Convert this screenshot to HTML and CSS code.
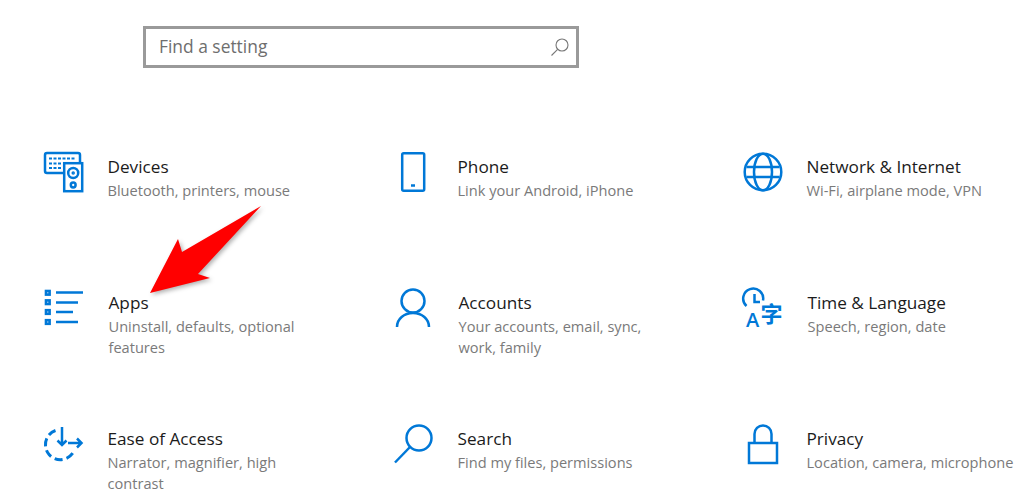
FILE: index.html
```html
<!DOCTYPE html>
<html lang="en">
<head>
<meta charset="utf-8">
<title>Settings</title>
<link rel="stylesheet" href="styles.css">
</head>
<body>
<main class="page">
  <div class="search">
    <span class="search-text">Find a setting</span>
    <svg class="search-icon" viewBox="0 0 20 20"><circle cx="12" cy="8" r="6"/><path d="M7.600 12.400 1.500 18.500"/></svg>
  </div>
  <div class="grid">
    <section class="item">
      <svg class="icon" viewBox="0 0 44 44"><path d="M19 23H3a2 2 0 0 1-2-2V5a2 2 0 0 1 2-2h31a2 2 0 0 1 2 2v8"/><rect x="20.200" y="13.200" width="18" height="28"/><circle cx="29.200" cy="23" r="5"/><circle class="thin" cx="29.200" cy="23" r="1"/><circle cx="29.200" cy="35" r="2.400"/><path class="dash" d="M5 8.500H32"/><path class="dash" d="M5 13.500H18M5 18H18"/></svg>
      <div class="text"><h2>Devices</h2><p>Bluetooth, printers, mouse</p></div>
    </section>
    <section class="item">
      <svg class="icon" viewBox="0 0 44 44"><rect x="8.200" y="3.200" width="22" height="37.600" rx="1.500"/><path d="M17 35.500H21"/></svg>
      <div class="text"><h2>Phone</h2><p>Link your Android, iPhone</p></div>
    </section>
    <section class="item">
      <svg class="icon" viewBox="0 0 44 44"><circle cx="20" cy="22" r="18.300"/><ellipse cx="20" cy="22" rx="9" ry="18.300"/><path d="M3.500 17H36.500M3.500 27H36.500"/></svg>
      <div class="text"><h2>Network &amp; Internet</h2><p>Wi-Fi, airplane mode, VPN</p></div>
    </section>

    <section class="item shifted">
      <svg class="icon" viewBox="0 0 44 44"><rect class="box" x="2" y="5" width="3.600" height="3.600"/><rect class="box" x="2" y="14.400" width="3.600" height="3.600"/><rect class="box" x="2" y="24.200" width="3.600" height="3.600"/><rect class="box" x="2" y="34.200" width="3.600" height="3.600"/><path d="M12 6.500H39M12 16.500H34M12 26H29M12 36H34"/></svg>
      <div class="text"><h2>Apps</h2><p>Uninstall, defaults, optional features</p></div>
    </section>
    <section class="item shifted">
      <svg class="icon" viewBox="0 0 44 44"><circle cx="19" cy="15" r="11.500"/><path d="M3 41C3 33 10 27 19 27S35 33 35 41"/></svg>
      <div class="text"><h2>Accounts</h2><p>Your accounts, email, sync, work, family</p></div>
    </section>
    <section class="item shifted">
      <svg class="icon" viewBox="0 0 44 44"><path d="M3.500 20A10 10 0 1 1 20 14.500"/><path d="M11.500 8V16H17"/><text class="glyph latin" x="3" y="41">A</text><text class="glyph cjk" x="17.500" y="36">字</text></svg>
      <div class="text"><h2>Time &amp; Language</h2><p>Speech, region, date</p></div>
    </section>

    <section class="item">
      <svg class="icon" viewBox="0 0 44 44"><path class="ring" d="M11.500 8.500A15 15 0 1 0 30 29"/><path d="M18 5V23M13.500 18.500 18 23 22.500 18.500M24 21H37M33 16.500 37.500 21 33 25.500"/></svg>
      <div class="text"><h2>Ease of Access</h2><p>Narrator, magnifier, high contrast</p></div>
    </section>
    <section class="item">
      <svg class="icon" viewBox="0 0 44 44"><circle cx="25" cy="16" r="12.500"/><path d="M16 25 1 40.500"/></svg>
      <div class="text"><h2>Search</h2><p>Find my files, permissions</p></div>
    </section>
    <section class="item">
      <svg class="icon" viewBox="0 0 44 44"><rect x="6" y="21" width="28" height="20"/><path d="M11.500 21V12a8.500 8.500 0 0 1 17 0V21"/></svg>
      <div class="text"><h2>Privacy</h2><p>Location, camera, microphone</p></div>
    </section>
  </div>
  <svg class="arrow" viewBox="0 0 1024 501"><polygon points="150,293 210,278 198,274 261,206 182,252 178,239"/></svg>
</main>
</body>
</html>
```

FILE: styles.css
```css
* { box-sizing: border-box; }
html, body { margin: 0; padding: 0; background: #fff; }
body { font-family: "Open Sans", "Noto Sans", sans-serif; overflow: hidden; }
.page { position: relative; width: 1024px; height: 501px; overflow: hidden; padding: 26px 0 0; }
.search {
  display: flex; align-items: center; justify-content: space-between;
  width: 436px; height: 42px; margin-left: 143px;
  border: 3px solid #9a9a9a; padding: 0 6px 0 13px; background: #fff;
}
.search-text { font-size: 17.400px; color: #6e6e6e; padding-bottom: 2px; }
.search-icon { width: 20px; height: 20px; fill: none; stroke: #777; stroke-width: 1.100; }
.grid {
  display: grid; grid-template-columns: 350px 349px 325px; grid-auto-rows: 136px;
  margin-top: 82px; padding-left: 44px;
}
.item { display: flex; gap: 19.500px; min-width: 0; }
.item.shifted { gap: 20.500px; }
.icon { flex: none; width: 44px; height: 44px; fill: none; stroke: #0078d7; stroke-width: 2.500; overflow: visible; }
.icon .dash { stroke-dasharray: 3 1.500; stroke-width: 2; }
.icon .thin { stroke-width: 1.500; }
.icon .box { stroke-width: 2.600; fill: #fff; }
.icon .ring { stroke-dasharray: 8 4; stroke-width: 3; }
.icon .glyph { fill: #0078d7; stroke: none; }
.icon .latin { font: 600 20px "Open Sans", sans-serif; }
.icon .cjk { font: 700 22px "Noto Sans CJK SC", sans-serif; }
.text { width: 200px; min-width: 0; flex: none; padding-top: 3px; }
.item:nth-child(3n) .text { width: 225px; }
h2 { margin: 0; font-size: 17.200px; line-height: 27px; font-weight: 400; color: #1b1b1b; }
p { margin: 0; padding-top: 0; font-size: 14.600px; line-height: 21px; color: #7a7a7a; }
.arrow { position: absolute; left: 0; top: 0; width: 1024px; height: 501px; }
.arrow polygon { fill: #f00; filter: drop-shadow(2px 2px 2px rgba(0,0,0,.3)); }
```
